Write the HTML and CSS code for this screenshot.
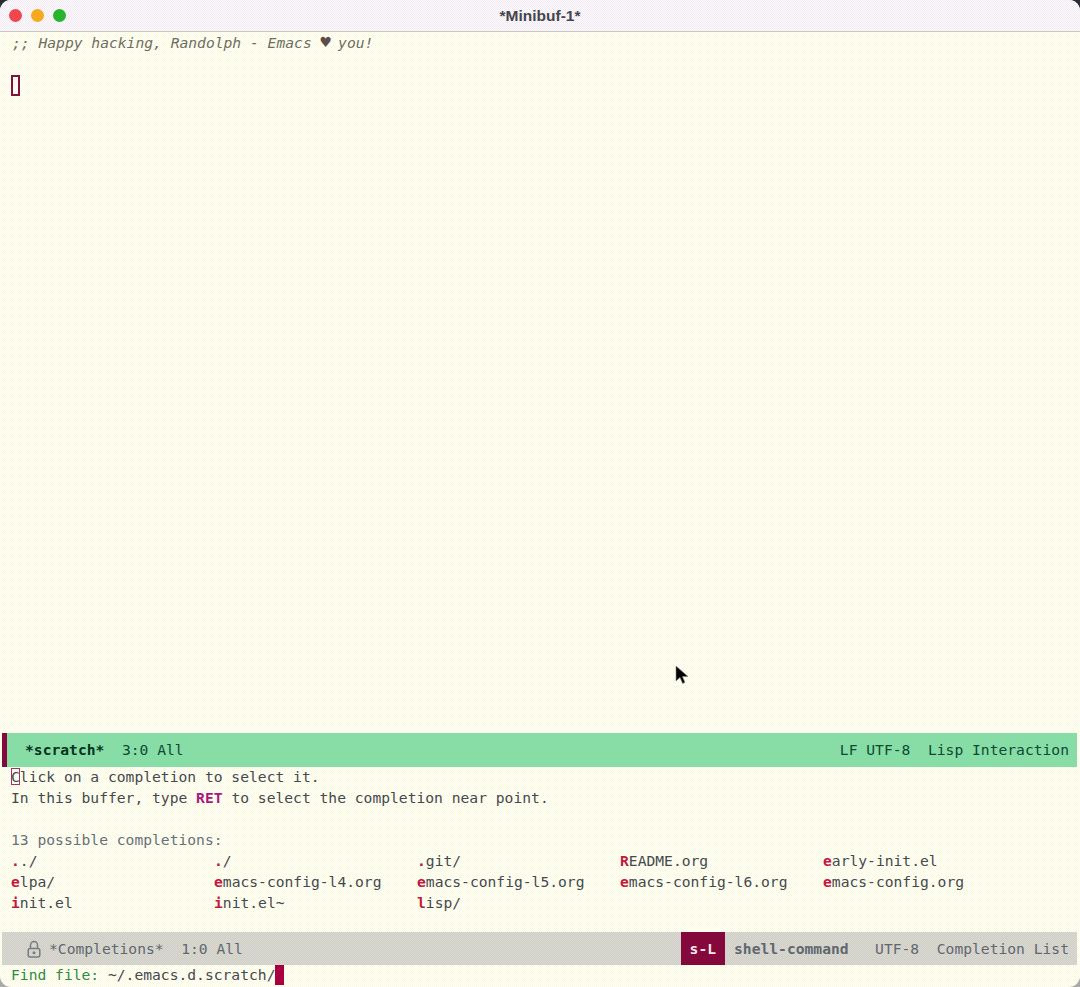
FILE: index.html
```html
<!DOCTYPE html>
<html>
<head>
<title>*Minibuf-1*</title>
<link rel="stylesheet" href="styles.css">
</head>
<body>
  <div class="window">
    <div class="titlebar">
      <div class="lights">
        <span class="light red"></span>
        <span class="light amber"></span>
        <span class="light green"></span>
      </div>
      <div class="title">*Minibuf-1*</div>
    </div>

    <div class="buffer">
      <div class="line comment">;; Happy hacking, Randolph - Emacs <span class="heart">♥</span> you!</div>
      <div class="line">&nbsp;</div>
      <div class="line"><span class="cursor-box">&nbsp;</span></div>
    </div>

    <div class="modeline active">
      <div class="ml-left"><b>*scratch*</b>  3:0 All</div>
      <div class="ml-right">LF UTF-8  Lisp Interaction</div>
    </div>

    <div class="completions">
      <div class="line"><span class="cursor-thin">C</span>lick on a completion to select it.</div>
      <div class="line">In this buffer, type <b class="key">RET</b> to select the completion near point.</div>
      <div class="line">&nbsp;</div>
      <div class="line heading">13 possible completions:</div>
      <div class="grid">
        <div><b>.</b>./</div>
        <div><b>.</b>/</div>
        <div><b>.</b>git/</div>
        <div><b>R</b>EADME.org</div>
        <div><b>e</b>arly-init.el</div>
        <div><b>e</b>lpa/</div>
        <div><b>e</b>macs-config-l4.org</div>
        <div><b>e</b>macs-config-l5.org</div>
        <div><b>e</b>macs-config-l6.org</div>
        <div><b>e</b>macs-config.org</div>
        <div><b>i</b>nit.el</div>
        <div><b>i</b>nit.el~</div>
        <div><b>l</b>isp/</div>
      </div>
    </div>

    <div class="modeline inactive">
      <div class="ml-left">
        <svg class="lock" width="14" height="18" viewBox="0 0 14 18">
          <path d="M3.5 9V5a3.5 3.5 0 0 1 7 0v4" fill="none" stroke="#777b82" stroke-width="1.5"/>
          <rect x="1.2" y="8.5" width="11.6" height="8.5" rx="2" fill="none" stroke="#777b82" stroke-width="1.5"/>
          <circle cx="7" cy="12.7" r="1.5" fill="#777b82"/>
        </svg>
        <span>*Completions*  1:0 All</span>
      </div>
      <div class="ml-right">
        <span class="key-box">s-L</span>
        <span><b>shell-command</b>   UTF-8  Completion List</span>
      </div>
    </div>

    <div class="minibuffer"><span class="prompt">Find file:</span> ~/.emacs.d.scratch/<span class="cursor-fill"></span></div>
  </div>

  <svg class="pointer" width="14" height="20" viewBox="0 0 14 20">
    <path d="M1 1v15l4-3.6 2.6 6 2.4-1-2.6-5.8H13z" fill="#000" stroke="#888" stroke-width=".6"/>
  </svg>
</body>
</html>
```

FILE: styles.css
```css
html, body {
  margin: 0;
  height: 987px;
  overflow: hidden;
}
body {
  background: linear-gradient(#2a2a33, #a9a9a9 20%);
  font-family: "DejaVu Sans Mono", "Liberation Mono", monospace;
  font-size: 14.65px;
  line-height: 21px;
  color: #45494e;
}
.window {
  height: 987px;
  display: flex;
  flex-direction: column;
  border-radius: 11px;
  overflow: hidden;
  background-color: #fdfdec;
  background-image: conic-gradient(#ffffff 25%, #fbfbdc 0 50%, #ffffff 0 75%, #fbfbdc 0);
  background-size: 2px 2px;
}
.titlebar {
  height: 31px;
  flex: none;
  display: flex;
  align-items: center;
  justify-content: center;
  position: relative;
  background-image: conic-gradient(#fdfbfd 25%, #f0e9f2 0 50%, #fdfbfd 0 75%, #f0e9f2 0);
  background-size: 2px 2px;
  border-bottom: 1px solid #c8c8bc;
}
.lights {
  position: absolute;
  left: 9px;
  top: 9px;
  display: flex;
  gap: 9px;
}
.light {
  width: 13px;
  height: 13px;
  border-radius: 50%;
}
.red { background: #f2464e; }
.amber { background: #f6a91d; }
.green { background: #27b52f; }
.title {
  font-family: "Liberation Sans", sans-serif;
  font-weight: bold;
  font-size: 15.5px;
  color: #45454d;
}
.line, .ml-left, .ml-right, .minibuffer {
  white-space: pre;
}
.buffer {
  flex: 1;
  padding: 1px 0 0 11px;
}
.comment {
  font-style: italic;
  color: #6e6e62;
  margin: -1px 0 1px 1px;
}
.heart {
  color: #5d4c48;
  font-size: 17px;
  line-height: 0;
  margin-right: -1.5px;
}
.cursor-box {
  display: inline-block;
  width: 9px;
  height: 21px;
  box-sizing: border-box;
  border: 2px solid #85103f;
}
.modeline {
  flex: none;
  display: flex;
  justify-content: space-between;
  align-items: center;
  margin: 0 3px 0 2px;
  box-sizing: border-box;
  padding-right: 8px;
}
.modeline.active {
  height: 34px;
  padding-left: 18px;
  border-left: 5px solid #85083d;
  color: #0f4a33;
  background-image: conic-gradient(#80dea1 25%, #8edcab 0 50%, #80dea1 0 75%, #8edcab 0);
  background-size: 2px 2px;
}
.modeline.active .ml-left, .modeline.active .ml-right {
  position: relative;
  top: -1px;
}
.modeline.active b {
  color: #07331f;
}
.modeline.inactive {
  height: 33px;
  padding-left: 25px;
  color: #62676f;
  background-image: conic-gradient(#cfcfc8 25%, #d9d9d2 0 50%, #cfcfc8 0 75%, #d9d9d2 0);
  background-size: 2px 2px;
}
.modeline.inactive .ml-left, .modeline.inactive .ml-right {
  display: flex;
  align-items: center;
  height: 100%;
}
.lock {
  margin-right: 8px;
}
.key-box {
  align-self: stretch;
  display: flex;
  align-items: center;
  padding: 0 9px;
  margin-right: 9px;
  background: #85083d;
  color: #f6e6ea;
  font-weight: bold;
}
.completions {
  flex: none;
  height: 166px;
  margin-top: -1px;
  padding-left: 11px;
}
.cursor-thin {
  box-shadow: inset 0 0 0 1px #a8306a;
}
.key {
  color: #a8177e;
}
.heading {
  color: #68707a;
}
.grid {
  display: grid;
  grid-template-columns: repeat(5, 203px);
  grid-auto-rows: 21px;
  white-space: pre;
}
.grid b {
  color: #c3173f;
}
.minibuffer {
  flex: none;
  height: 23px;
  margin-top: -1px;
  padding-left: 11px;
  display: flex;
}
.prompt {
  color: #2e8b3e;
}
.cursor-fill {
  width: 9px;
  height: 20px;
  margin-top: 1px;
  background: #ab0040;
}
.pointer {
  position: absolute;
  left: 675px;
  top: 665px;
}
```
